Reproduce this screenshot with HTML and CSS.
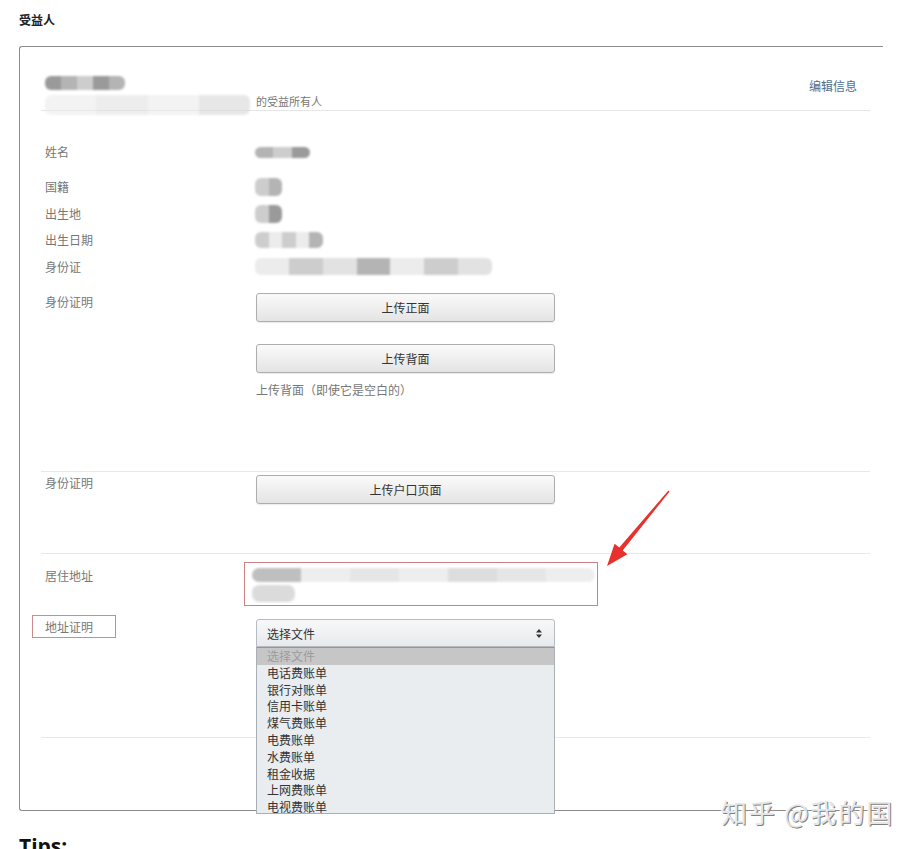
FILE: index.html
```html
<!DOCTYPE html>
<html lang="zh">
<head>
<meta charset="utf-8">
<title>受益人</title>
<link rel="stylesheet" href="styles.css">
</head>
<body>
<div class="page">
  <h2 class="title">受益人</h2>

  <div class="card">
    <div class="card-head">
      <div class="owner">
        <div class="blur name-blur"><span class="g1"></span><span class="g2"></span><span class="g3"></span><span class="g1"></span><span class="g2"></span></div>
        <div class="owner-line">
          <div class="blur owner-blur"><span class="l1"></span><span class="l2"></span><span class="l1"></span><span class="l3"></span></div>
          <span class="owner-text">的受益所有人</span>
        </div>
      </div>
      <a class="edit-link">编辑信息</a>
    </div>

    <div class="info">
      <div class="info-row first">
        <span class="label">姓名</span>
        <span class="value"><span class="blur v-name"><span class="g2"></span><span class="g3"></span><span class="g1"></span></span></span>
      </div>
      <div class="info-row">
        <span class="label">国籍</span>
        <span class="value"><span class="blur v-small"><span class="g3"></span><span class="g2"></span></span></span>
      </div>
      <div class="info-row">
        <span class="label">出生地</span>
        <span class="value"><span class="blur v-small"><span class="g3"></span><span class="g1"></span></span></span>
      </div>
      <div class="info-row">
        <span class="label">出生日期</span>
        <span class="value"><span class="blur v-date"><span class="g3"></span><span class="l1"></span><span class="g3"></span><span class="l1"></span><span class="g2"></span></span></span>
      </div>
      <div class="info-row">
        <span class="label">身份证</span>
        <span class="value"><span class="blur v-id"><span class="l1"></span><span class="g3"></span><span class="l2"></span><span class="g2"></span><span class="l1"></span><span class="g3"></span><span class="l2"></span></span></span>
      </div>
    </div>

    <div class="row row-id">
      <span class="label">身份证明</span>
      <div class="field">
        <button class="btn">上传正面</button>
        <button class="btn btn-gap">上传背面</button>
        <p class="note">上传背面（即使它是空白的）</p>
      </div>
    </div>

    <div class="row row-hukou divided">
      <span class="label label-up">身份证明</span>
      <div class="field">
        <button class="btn">上传户口页面</button>
      </div>
    </div>

    <div class="row row-addr divided">
      <span class="label label-addr">居住地址</span>
      <div class="field">
        <div class="addr-box">
          <div class="blur addr-l1"><span class="g2"></span><span class="l1"></span><span class="l2"></span><span class="l1"></span><span class="l3"></span><span class="l2"></span><span class="l1"></span></div>
          <div class="blur addr-l2"><span class="g3"></span></div>
        </div>
      </div>
    </div>

    <div class="row row-proof">
      <span class="label label-boxed">地址证明</span>
      <div class="field">
        <div class="select">
          <span>选择文件</span>
          <svg class="caret" width="6" height="9" viewBox="0 0 6 9"><path d="M3 0 L6 3.5 H0 Z M0 5.5 H6 L3 9 Z" fill="#333"/></svg>
          <ul class="options">
            <li class="active">选择文件</li>
            <li>电话费账单</li>
            <li>银行对账单</li>
            <li>信用卡账单</li>
            <li>煤气费账单</li>
            <li>电费账单</li>
            <li>水费账单</li>
            <li>租金收据</li>
            <li>上网费账单</li>
            <li>电视费账单</li>
          </ul>
        </div>
      </div>
    </div>

    <div class="card-foot divided"></div>
  </div>

  <h3 class="tips">Tips:</h3>

  <svg class="arrow" width="920" height="849" viewBox="0 0 920 849">
    <polygon points="668.4,490.5 619.3,547.6 614.6,543.8 607,566 627.4,554.2 622.7,550.4 669.6,491.5" fill="#e8302c"/>
  </svg>
  <div class="watermark">知乎 @我的国</div>
</div>
</body>
</html>
```

FILE: styles.css
```css
* { box-sizing: border-box; }

html, body {
  margin: 0;
  padding: 0;
  background: #fff;
}

body {
  font-family: "Noto Sans CJK SC", "Noto Sans", sans-serif;
  font-size: 12px;
  color: #777;
  overflow: hidden;
  height: 849px;
}

.page {
  position: relative;
  width: 920px;
  height: 849px;
  padding-left: 19px;
  padding-top: 11px;
}

.title {
  margin: 0 0 17px;
  font-size: 12px;
  line-height: 18px;
  font-weight: bold;
  color: #222;
}

.card {
  position: relative;
  width: 864px;
  border: 1px solid #8c8c8c;
  border-right: none;
  border-radius: 3px 0 0 3px;
  padding: 0 13px 0 21px;
}

/* header */
.card-head {
  height: 64px;
  padding-top: 29px;
  border-bottom: 1px solid #e6e6e6;
  display: flex;
  justify-content: space-between;
  align-items: flex-start;
}

.owner { padding-left: 4px; }

.owner-line {
  display: flex;
  align-items: flex-start;
  margin-top: 2px;
}

.owner-text {
  font-size: 11px;
  line-height: 18px;
  color: #777;
  margin-left: 6px;
}

.edit-link {
  margin-top: 1px;
  margin-right: 13px;
  line-height: 18px;
  color: #4d6f8f;
  cursor: pointer;
}

/* blur placeholders */
.blur {
  display: flex;
  filter: blur(1.2px);
  border-radius: 6px;
  overflow: hidden;
}
.blur span { flex: 1; height: 100%; }
.g1 { background: #9a9a9a; }
.g2 { background: #b4b4b4; }
.g3 { background: #cdcdcd; }
.l1 { background: #ececec; }
.l2 { background: #e2e2e2; }
.l3 { background: #d8d8d8; }

.name-blur { width: 80px; height: 14px; }
.owner-blur { width: 205px; height: 20px; margin-top: 3px; opacity: 0.6; }

/* info list */
.info {
  padding-top: 28px;
  padding-left: 4px;
}

.info-row {
  display: grid;
  grid-template-columns: 210px 1fr;
  height: 26.5px;
  line-height: 26.5px;
  align-items: center;
}
.info-row.first { margin-bottom: 8.5px; }

.label { color: #777; line-height: 18px; }

.value { display: flex; align-items: center; }
.v-name { width: 55px; height: 11px; }
.v-small { width: 27px; height: 18px; }
.v-date { width: 68px; height: 16px; }
.v-id { width: 237px; height: 17px; }

/* form rows */
.row {
  display: grid;
  grid-template-columns: 211px 299px;
  padding-left: 4px;
  align-items: start;
}

.divided { border-top: 1px solid #e8e8e8; }

.row-id { padding-top: 13px; padding-bottom: 72px; }
.row-hukou { padding-top: 3px; padding-bottom: 49px; }
.label-up { margin-top: -1px; }
.row-addr { padding-top: 8px; padding-bottom: 9px; }
.label-addr { margin-top: 5px; }
.row-proof { padding-bottom: 90px; }

.field { position: relative; }

.btn {
  display: block;
  width: 299px;
  height: 29px;
  border: 1px solid #adadad;
  border-radius: 3px;
  background: linear-gradient(#fafafa, #e4e4e4);
  box-shadow: 0 1px 1px rgba(0,0,0,0.08);
  font-family: "Noto Sans CJK SC", sans-serif;
  font-size: 12px;
  color: #333;
  padding: 0;
  cursor: pointer;
}
.btn-gap { margin-top: 22px; }

.note {
  margin: 8px 0 0;
  line-height: 18px;
  color: #777;
}

.addr-box {
  width: 354px;
  height: 44px;
  margin-left: -12px;
  border: 1px solid #c98282;
  padding: 5px 2px 0 7px;
}
.addr-l1 { width: 343px; height: 14px; border-radius: 7px; opacity: 0.85; }
.addr-l2 { width: 43px; height: 17px; margin-top: 3px; border-radius: 7px; opacity: 0.7; }

.label-boxed {
  justify-self: start;
  margin-left: -13px;
  width: 84px;
  height: 23px;
  line-height: 21px;
  padding-left: 12px;
  border: 1px solid #cf8a8a;
}

.select {
  position: relative;
  margin-top: 4px;
  width: 299px;
  height: 28px;
  border: 1px solid #b6bcc2;
  border-radius: 3px 3px 0 0;
  background: linear-gradient(#f7f8fa, #e7eaed);
  display: flex;
  align-items: center;
  justify-content: space-between;
  padding: 0 10px 0 10px;
  color: #333;
}
.caret { margin-right: 2px; }

.options {
  position: absolute;
  left: -1px;
  top: 27px;
  width: 299px;
  height: 167px;
  margin: 0;
  padding: 0;
  list-style: none;
  background: #eaedf0;
  border: 1px solid #a9afb6;
  border-top-color: #8f969d;
  overflow: hidden;
  z-index: 2;
}
.options li {
  height: 16.8px;
  line-height: 16.8px;
  padding-left: 10px;
  color: #333;
}
.options li.active {
  background: #c6c6c6;
  color: #9c9c9c;
}

.card-foot { height: 73px; }

.tips {
  margin: 22px 0 0;
  font-family: "Open Sans", "Liberation Sans", sans-serif;
  font-size: 21px;
  line-height: 26px;
  font-weight: bold;
  color: #111;
}

.arrow {
  position: absolute;
  left: 0;
  top: 0;
  pointer-events: none;
  z-index: 3;
}

.watermark {
  position: absolute;
  left: 721px;
  top: 796px;
  font-size: 26px;
  line-height: 32px;
  letter-spacing: 1.8px;
  color: #e6e6e6;
  text-shadow: 1px 1px 0 #808080, -1px -1px 0 #fff;
  white-space: nowrap;
  z-index: 4;
}
```
